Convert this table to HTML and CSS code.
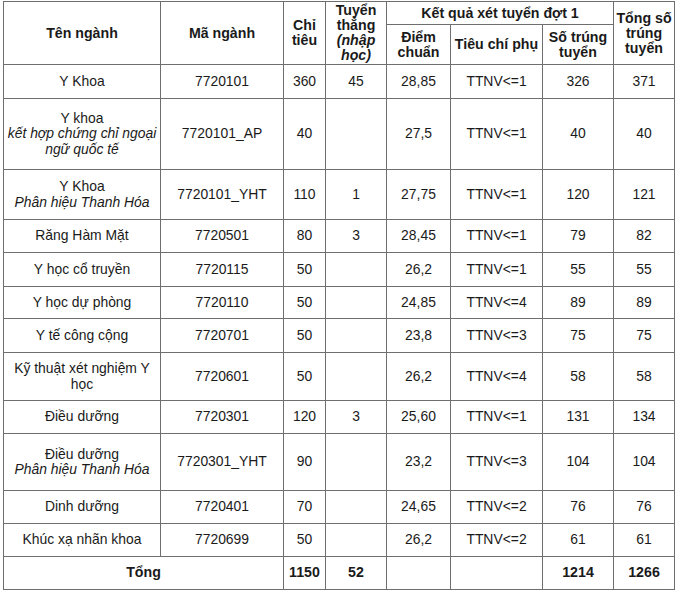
FILE: index.html
```html
<!DOCTYPE html>
<html lang="vi">
<head>
<meta charset="utf-8">
<title>Kết quả xét tuyển</title>
<link rel="stylesheet" href="styles.css">
</head>
<body>
<div class="page">
<table class="results">
  <colgroup>
    <col class="c-name"><col class="c-code"><col class="c-quota"><col class="c-direct">
    <col class="c-score"><col class="c-crit"><col class="c-admit"><col class="c-total">
  </colgroup>
  <thead>
    <tr class="h1">
      <th rowspan="2">Tên ngành</th>
      <th rowspan="2">Mã ngành</th>
      <th rowspan="2">Chỉ<br>tiêu</th>
      <th rowspan="2" class="tight">Tuyển<br>thẳng<br><i>(nhập<br>học)</i></th>
      <th colspan="3">Kết quả xét tuyển đợt 1</th>
      <th rowspan="2" class="tight">Tổng số<br>trúng<br>tuyển</th>
    </tr>
    <tr class="h2">
      <th>Điểm<br>chuẩn</th>
      <th>Tiêu chí phụ</th>
      <th>Số trúng<br>tuyển</th>
    </tr>
  </thead>
  <tbody>
    <tr class="r34"><td>Y Khoa</td><td>7720101</td><td>360</td><td>45</td><td>28,85</td><td>TTNV&lt;=1</td><td>326</td><td>371</td></tr>
    <tr class="r71"><td>Y khoa<br><i>kết hợp chứng chỉ ngoại<br>ngữ quốc tế</i></td><td>7720101_AP</td><td>40</td><td></td><td>27,5</td><td>TTNV&lt;=1</td><td>40</td><td>40</td></tr>
    <tr class="r50"><td>Y Khoa<br><i>Phân hiệu Thanh Hóa</i></td><td>7720101_YHT</td><td>110</td><td>1</td><td>27,75</td><td>TTNV&lt;=1</td><td>120</td><td>121</td></tr>
    <tr class="r33"><td>Răng Hàm Mặt</td><td>7720501</td><td>80</td><td>3</td><td>28,45</td><td>TTNV&lt;=1</td><td>79</td><td>82</td></tr>
    <tr class="r34"><td>Y học cổ truyền</td><td>7720115</td><td>50</td><td></td><td>26,2</td><td>TTNV&lt;=1</td><td>55</td><td>55</td></tr>
    <tr class="r32"><td>Y học dự phòng</td><td>7720110</td><td>50</td><td></td><td>24,85</td><td>TTNV&lt;=4</td><td>89</td><td>89</td></tr>
    <tr class="r34"><td>Y tế công cộng</td><td>7720701</td><td>50</td><td></td><td>23,8</td><td>TTNV&lt;=3</td><td>75</td><td>75</td></tr>
    <tr class="r48"><td>Kỹ thuật xét nghiệm Y<br>học</td><td>7720601</td><td>50</td><td></td><td>26,2</td><td>TTNV&lt;=4</td><td>58</td><td>58</td></tr>
    <tr class="r33"><td>Điều dưỡng</td><td>7720301</td><td>120</td><td>3</td><td>25,60</td><td>TTNV&lt;=1</td><td>131</td><td>134</td></tr>
    <tr class="r57"><td>Điều dưỡng<br><i>Phân hiệu Thanh Hóa</i></td><td>7720301_YHT</td><td>90</td><td></td><td>23,2</td><td>TTNV&lt;=3</td><td>104</td><td>104</td></tr>
    <tr class="r33"><td>Dinh dưỡng</td><td>7720401</td><td>70</td><td></td><td>24,65</td><td>TTNV&lt;=2</td><td>76</td><td>76</td></tr>
    <tr class="r33"><td>Khúc xạ nhãn khoa</td><td>7720699</td><td>50</td><td></td><td>26,2</td><td>TTNV&lt;=2</td><td>61</td><td>61</td></tr>
    <tr class="r33 total"><td colspan="2">Tổng</td><td>1150</td><td>52</td><td></td><td></td><td>1214</td><td>1266</td></tr>
  </tbody>
</table>
</div>
</body>
</html>
```
FILE: styles.css
```css
html, body {
  margin: 0;
  padding: 0;
  background: #ffffff;
}
.page {
  padding: 1px 0 0 3px;
}
.results {
  border-collapse: collapse;
  table-layout: fixed;
  width: 672px;
  font-family: "Liberation Sans", Arial, sans-serif;
  font-size: 13.9px;
  line-height: 15.5px;
  color: #1a1a1a;
}
.results th,
.results td {
  border: 1px solid #6e6e6e;
  padding: 0 1px;
  text-align: center;
  vertical-align: middle;
  overflow: hidden;
}
.results th {
  font-weight: bold;
  font-size: 14.2px;
  line-height: 15px;
}
.results th.tight { padding: 0; }
.c-name { width: 157px; }
.c-code { width: 123px; }
.c-quota { width: 42px; }
.c-direct { width: 61px; }
.c-score { width: 64px; }
.c-crit { width: 92px; }
.c-admit { width: 71px; }
.c-total { width: 61px; }

.h1 { height: 23px; }
.h2 { height: 40px; }
.r32 { height: 32px; }
.r33 { height: 33px; }
.r34 { height: 34px; }
.r48 { height: 48px; }
.r50 { height: 50px; }
.r57 { height: 57px; }
.r71 { height: 71px; }

.total td { font-weight: bold; font-size: 14.2px; }
```
